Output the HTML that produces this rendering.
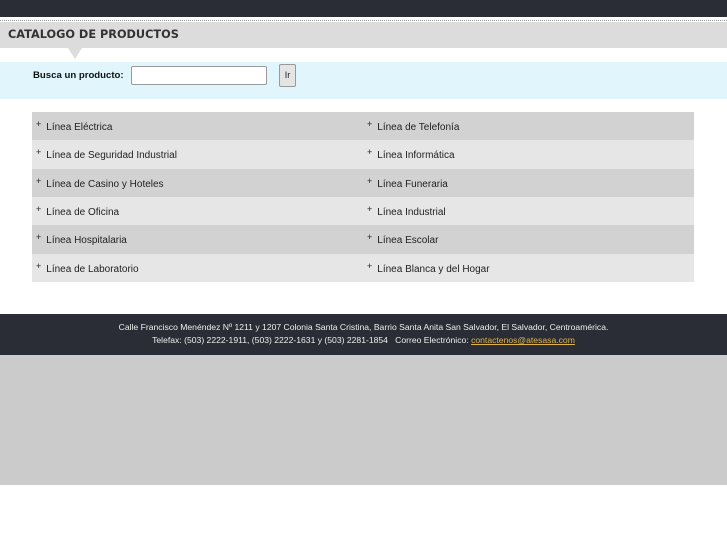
<!DOCTYPE html>
<html><head><meta charset="utf-8"><style>
*{margin:0;padding:0;box-sizing:border-box}
body{width:727px;height:545px;background:#fff;font-family:"Liberation Sans",sans-serif;position:relative;overflow:hidden}
.top{position:absolute;left:0;top:0;width:727px;height:17px;background:#2a2d35}
.dots{position:absolute;left:0;top:20px;width:727px;border-top:1px dotted #999}
.hdr{position:absolute;left:0;top:22px;width:727px;height:26px;background:#dcdcdc;font-weight:bold;font-size:11.3px;color:#333;padding:6px 0 0 8px;font-family:"DejaVu Sans",sans-serif}
.tri{position:absolute;left:68px;top:48px;width:0;height:0;border-left:7px solid transparent;border-right:7px solid transparent;border-top:11px solid #dcdcdc}
.search{position:absolute;left:0;top:62px;width:727px;height:37px;background:#e0f6fc}
.lbl{position:absolute;left:33px;top:70px;font-size:9.6px;font-weight:bold;color:#111}
.inp{position:absolute;left:131px;top:66px;width:136px;height:19px;background:#fff;border:1px solid #999;border-radius:2px}
.btn{position:absolute;left:279px;top:64px;width:17px;height:23px;background:#e4e4e4;border:1px solid #999;border-radius:2px;font-size:9px;text-align:center;line-height:21px;color:#222}
table{position:absolute;left:32px;top:112px;width:662px;height:170px;border-collapse:collapse}
td{height:28.3px;font-size:10px;color:#222;padding:3px 0 0 4px;vertical-align:middle}
tr:nth-child(odd){background:#d2d2d2}
tr:nth-child(even){background:#e6e6e6}
td span{font-size:9px;margin-right:5px;position:relative;top:-3px}
.foot{position:absolute;left:0;top:314px;width:727px;height:41px;background:#2a2d35;color:#eee;font-size:8.6px;text-align:center;padding-top:7px;line-height:13px}
.foot a{color:#e0b44a;text-decoration:underline}
.gray{position:absolute;left:0;top:355px;width:727px;height:130px;background:#cbcbcb}
</style></head><body>
<div class="top"></div><div class="dots"></div>
<div class="hdr">CATALOGO DE PRODUCTOS</div><div class="tri"></div>
<div class="search"></div>
<div class="lbl">Busca un producto:</div><div class="inp"></div><div class="btn">Ir</div>
<table>
<tr><td style="width:331px"><span>+</span>Línea Eléctrica</td><td><span>+</span>Línea de Telefonía</td></tr>
<tr><td><span>+</span>Línea de Seguridad Industrial</td><td><span>+</span>Línea Informática</td></tr>
<tr><td><span>+</span>Línea de Casino y Hoteles</td><td><span>+</span>Línea Funeraria</td></tr>
<tr><td><span>+</span>Línea de Oficina</td><td><span>+</span>Línea Industrial</td></tr>
<tr><td><span>+</span>Línea Hospitalaria</td><td><span>+</span>Línea Escolar</td></tr>
<tr><td><span>+</span>Línea de Laboratorio</td><td><span>+</span>Línea Blanca y del Hogar</td></tr>
</table>
<div class="foot">Calle Francisco Menéndez Nº 1211 y 1207 Colonia Santa Cristina, Barrio Santa Anita San Salvador, El Salvador, Centroamérica.<br>Telefax: (503) 2222-1911, (503) 2222-1631 y (503) 2281-1854 &nbsp; Correo Electrónico: <a>contactenos@atesasa.com</a></div>
<div class="gray"></div>
</body></html>
